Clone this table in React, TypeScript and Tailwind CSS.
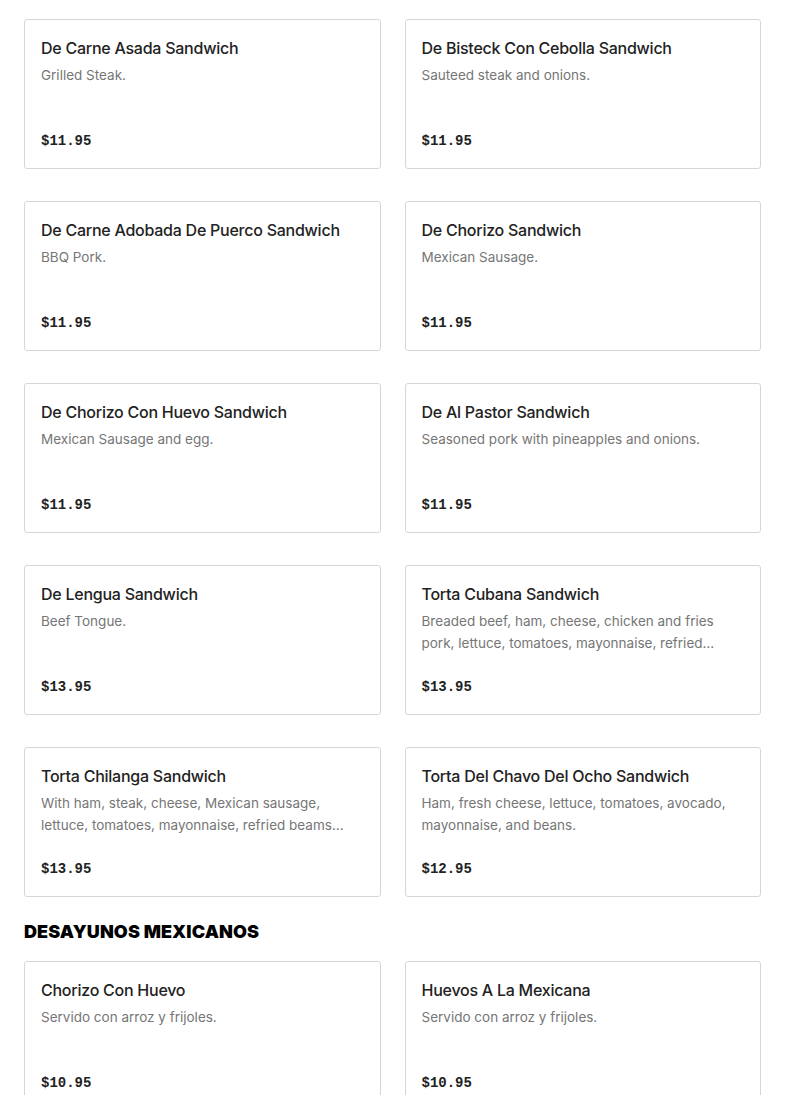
type Item = {
  name: string
  desc: string
  price: string
}

const sandwiches: Item[] = [
  { name: 'De Carne Asada Sandwich', desc: 'Grilled Steak.', price: '$11.95' },
  { name: 'De Bisteck Con Cebolla Sandwich', desc: 'Sauteed steak and onions.', price: '$11.95' },
  { name: 'De Carne Adobada De Puerco Sandwich', desc: 'BBQ Pork.', price: '$11.95' },
  { name: 'De Chorizo Sandwich', desc: 'Mexican Sausage.', price: '$11.95' },
  { name: 'De Chorizo Con Huevo Sandwich', desc: 'Mexican Sausage and egg.', price: '$11.95' },
  { name: 'De Al Pastor Sandwich', desc: 'Seasoned pork with pineapples and onions.', price: '$11.95' },
  { name: 'De Lengua Sandwich', desc: 'Beef Tongue.', price: '$13.95' },
  {
    name: 'Torta Cubana Sandwich',
    desc: 'Breaded beef, ham, cheese, chicken and fries pork, lettuce, tomatoes, mayonnaise, refried beans and avocado.',
    price: '$13.95',
  },
  {
    name: 'Torta Chilanga Sandwich',
    desc: 'With ham, steak, cheese, Mexican sausage, lettuce, tomatoes, mayonnaise, refried beams and avocado.',
    price: '$13.95',
  },
  {
    name: 'Torta Del Chavo Del Ocho Sandwich',
    desc: 'Ham, fresh cheese, lettuce, tomatoes, avocado, mayonnaise, and beans.',
    price: '$12.95',
  },
]

const desayunos: Item[] = [
  { name: 'Chorizo Con Huevo', desc: 'Servido con arroz y frijoles.', price: '$10.95' },
  { name: 'Huevos A La Mexicana', desc: 'Servido con arroz y frijoles.', price: '$10.95' },
]

function Card({ item }: { item: Item }) {
  return (
    <div className="flex h-[150px] flex-col rounded-[3px] border border-[#d6d6d6] bg-white px-4 pt-4 pb-[17px]">
      <h3 className="text-[16px] leading-6 font-medium text-[#222222] font-['Inter',sans-serif] tracking-[-0.25px]">
        {item.name}
      </h3>
      <p className="mt-1 line-clamp-2 pr-2 text-[13.5px] leading-[22px] text-[#767676] font-['Inter',sans-serif]">
        {item.desc}
      </p>
      <span className="mt-auto text-[14px] leading-5 font-bold text-[#222222] font-['Liberation_Mono',monospace]">
        {item.price}
      </span>
    </div>
  )
}

export default function App() {
  return (
    <div className="min-h-screen bg-white px-6 pt-[19px]">
      <div className="grid grid-cols-2 gap-x-6 gap-y-8">
        {sandwiches.map((s) => (
          <Card key={s.name} item={s} />
        ))}
      </div>
      <h2 className="mt-[23px] mb-[17px] text-[18px] leading-6 font-black uppercase text-black font-['Inter',sans-serif] tracking-[0.1px]">
        Desayunos Mexicanos
      </h2>
      <div className="grid grid-cols-2 gap-x-6 gap-y-8">
        {desayunos.map((s) => (
          <Card key={s.name} item={s} />
        ))}
      </div>
    </div>
  )
}
